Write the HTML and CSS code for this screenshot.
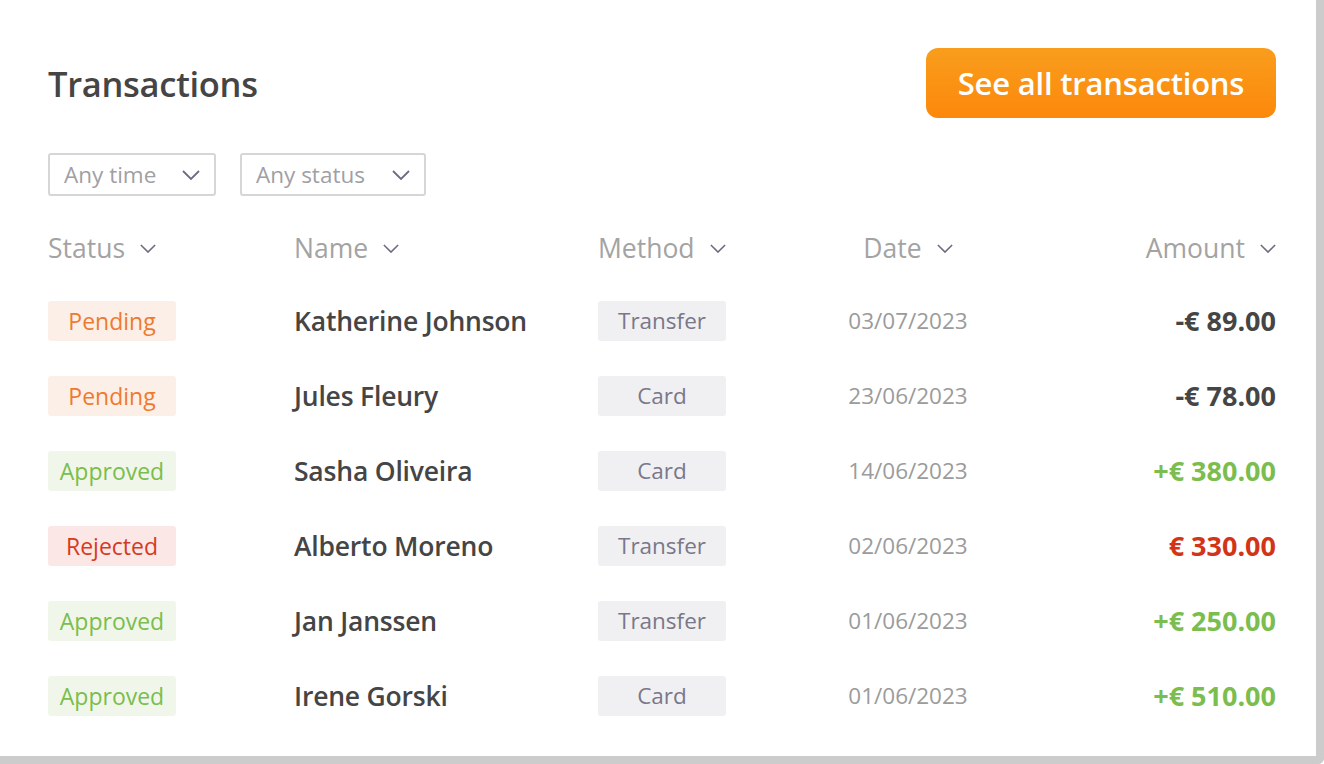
FILE: index.html
```html
<!DOCTYPE html>
<html lang="en">
<head>
<meta charset="utf-8">
<title>Transactions</title>
<link rel="stylesheet" href="styles.css">
</head>
<body>
<div class="card">
  <div class="head">
    <h1 class="title">Transactions</h1>
    <button class="btn">See all transactions</button>
  </div>
  <div class="filters">
    <div class="select sel-time"><span>Any time</span><svg class="chev" viewBox="0 0 18 10"><path d="M1 1l8 8 8-8"/></svg></div>
    <div class="select sel-status"><span>Any status</span><svg class="chev" viewBox="0 0 18 10"><path d="M1 1l8 8 8-8"/></svg></div>
  </div>
  <div class="table">
    <div class="row hrow">
      <div class="th">Status<svg class="hchev" viewBox="0 0 18 10"><path d="M1 1l8 8 8-8"/></svg></div>
      <div class="th">Name<svg class="hchev" viewBox="0 0 18 10"><path d="M1 1l8 8 8-8"/></svg></div>
      <div class="th">Method<svg class="hchev" viewBox="0 0 18 10"><path d="M1 1l8 8 8-8"/></svg></div>
      <div class="th c-date">Date<svg class="hchev" viewBox="0 0 18 10"><path d="M1 1l8 8 8-8"/></svg></div>
      <div class="th c-amt">Amount<svg class="hchev" viewBox="0 0 18 10"><path d="M1 1l8 8 8-8"/></svg></div>
    </div>
    <div class="row">
      <div><span class="badge pending">Pending</span></div>
      <div class="name">Katherine Johnson</div>
      <div><span class="method">Transfer</span></div>
      <div class="date c-date">03/07/2023</div>
      <div class="amt c-amt neg">-€ 89.00</div>
    </div>
    <div class="row">
      <div><span class="badge pending">Pending</span></div>
      <div class="name">Jules Fleury</div>
      <div><span class="method">Card</span></div>
      <div class="date c-date">23/06/2023</div>
      <div class="amt c-amt neg">-€ 78.00</div>
    </div>
    <div class="row">
      <div><span class="badge approved">Approved</span></div>
      <div class="name">Sasha Oliveira</div>
      <div><span class="method">Card</span></div>
      <div class="date c-date">14/06/2023</div>
      <div class="amt c-amt pos">+€ 380.00</div>
    </div>
    <div class="row">
      <div><span class="badge rejected">Rejected</span></div>
      <div class="name">Alberto Moreno</div>
      <div><span class="method">Transfer</span></div>
      <div class="date c-date">02/06/2023</div>
      <div class="amt c-amt rej">€ 330.00</div>
    </div>
    <div class="row">
      <div><span class="badge approved">Approved</span></div>
      <div class="name">Jan Janssen</div>
      <div><span class="method">Transfer</span></div>
      <div class="date c-date">01/06/2023</div>
      <div class="amt c-amt pos">+€ 250.00</div>
    </div>
    <div class="row">
      <div><span class="badge approved">Approved</span></div>
      <div class="name">Irene Gorski</div>
      <div><span class="method">Card</span></div>
      <div class="date c-date">01/06/2023</div>
      <div class="amt c-amt pos">+€ 510.00</div>
    </div>
  </div>
</div>
</body>
</html>
```
FILE: styles.css
```css
* { box-sizing: border-box; }
html, body { margin: 0; padding: 0; background: #ffffff; }
body { font-family: "Open Sans", "Noto Sans", sans-serif; color: #444; }

.card {
  width: 1324px;
  height: 764px;
  background: #fff;
  border-right: 8px solid #cccccc;
  border-bottom: 8px solid #cccccc;
  border-bottom-right-radius: 6px;
  padding: 48px 40px 0 48px;
}

.head {
  display: flex;
  align-items: center;
  justify-content: space-between;
  height: 70px;
}
.title {
  margin: 0;
  font-size: 34.5px;
  font-weight: 600;
  color: #454545;
  letter-spacing: -0.3px;
}
.btn {
  width: 350px;
  height: 70px;
  border: none;
  border-radius: 12px;
  background: linear-gradient(#f99d1d, #fc880b);
  color: #fff;
  font-family: inherit;
  font-size: 31px;
  font-weight: 600;
  letter-spacing: -0.2px;
  padding: 0;
}

.filters {
  display: flex;
  gap: 24px;
  margin-top: 35px;
}
.select {
  height: 43px;
  border: 2px solid #d6d6d6;
  border-radius: 3px;
  display: flex;
  align-items: center;
  justify-content: space-between;
  padding: 0 14px 0 14px;
  font-size: 22.5px;
  color: #a0a0a4;
}
.sel-time { width: 168px; }
.sel-status { width: 186px; }
.chev {
  width: 18px;
  height: 10px;
  fill: none;
  stroke: #6f6a82;
  stroke-width: 1.8;
}

.table { margin-top: 30px; }
.row {
  display: grid;
  grid-template-columns: 246px 304px 200px 220px 1fr;
  align-items: center;
  height: 75px;
}
.hrow { height: 44px; margin-bottom: 13px; }
.th {
  display: flex;
  align-items: center;
  gap: 15px;
  font-size: 26.5px;
  color: #a3a3a3;
}
.hchev {
  width: 16px;
  height: 9px;
  fill: none;
  stroke: #6f6a82;
  stroke-width: 1.8;
}
.c-date { justify-content: center; text-align: center; }
.c-amt { justify-content: flex-end; text-align: right; }

.badge {
  display: inline-flex;
  align-items: center;
  justify-content: center;
  width: 128px;
  height: 40px;
  border-radius: 3px;
  font-size: 23px;
}
.pending { background: #fcefe8; color: #ee7a30; }
.approved { background: #f0f7ea; color: #7bbd4e; }
.rejected { background: #fbe8e6; color: #d63a22; }

.name {
  font-size: 26.5px;
  font-weight: 600;
  color: #454545;
  letter-spacing: -0.2px;
}
.method {
  display: inline-flex;
  align-items: center;
  justify-content: center;
  width: 128px;
  height: 40px;
  border-radius: 3px;
  background: #f0f0f2;
  color: #7a778a;
  font-size: 22.5px;
}
.date {
  font-size: 22.5px;
  color: #9b9b9b;
}
.amt {
  font-size: 27px;
  font-weight: 700;
}
.neg { color: #454545; }
.pos { color: #7bbd4e; }
.rej { color: #d33418; }
```
